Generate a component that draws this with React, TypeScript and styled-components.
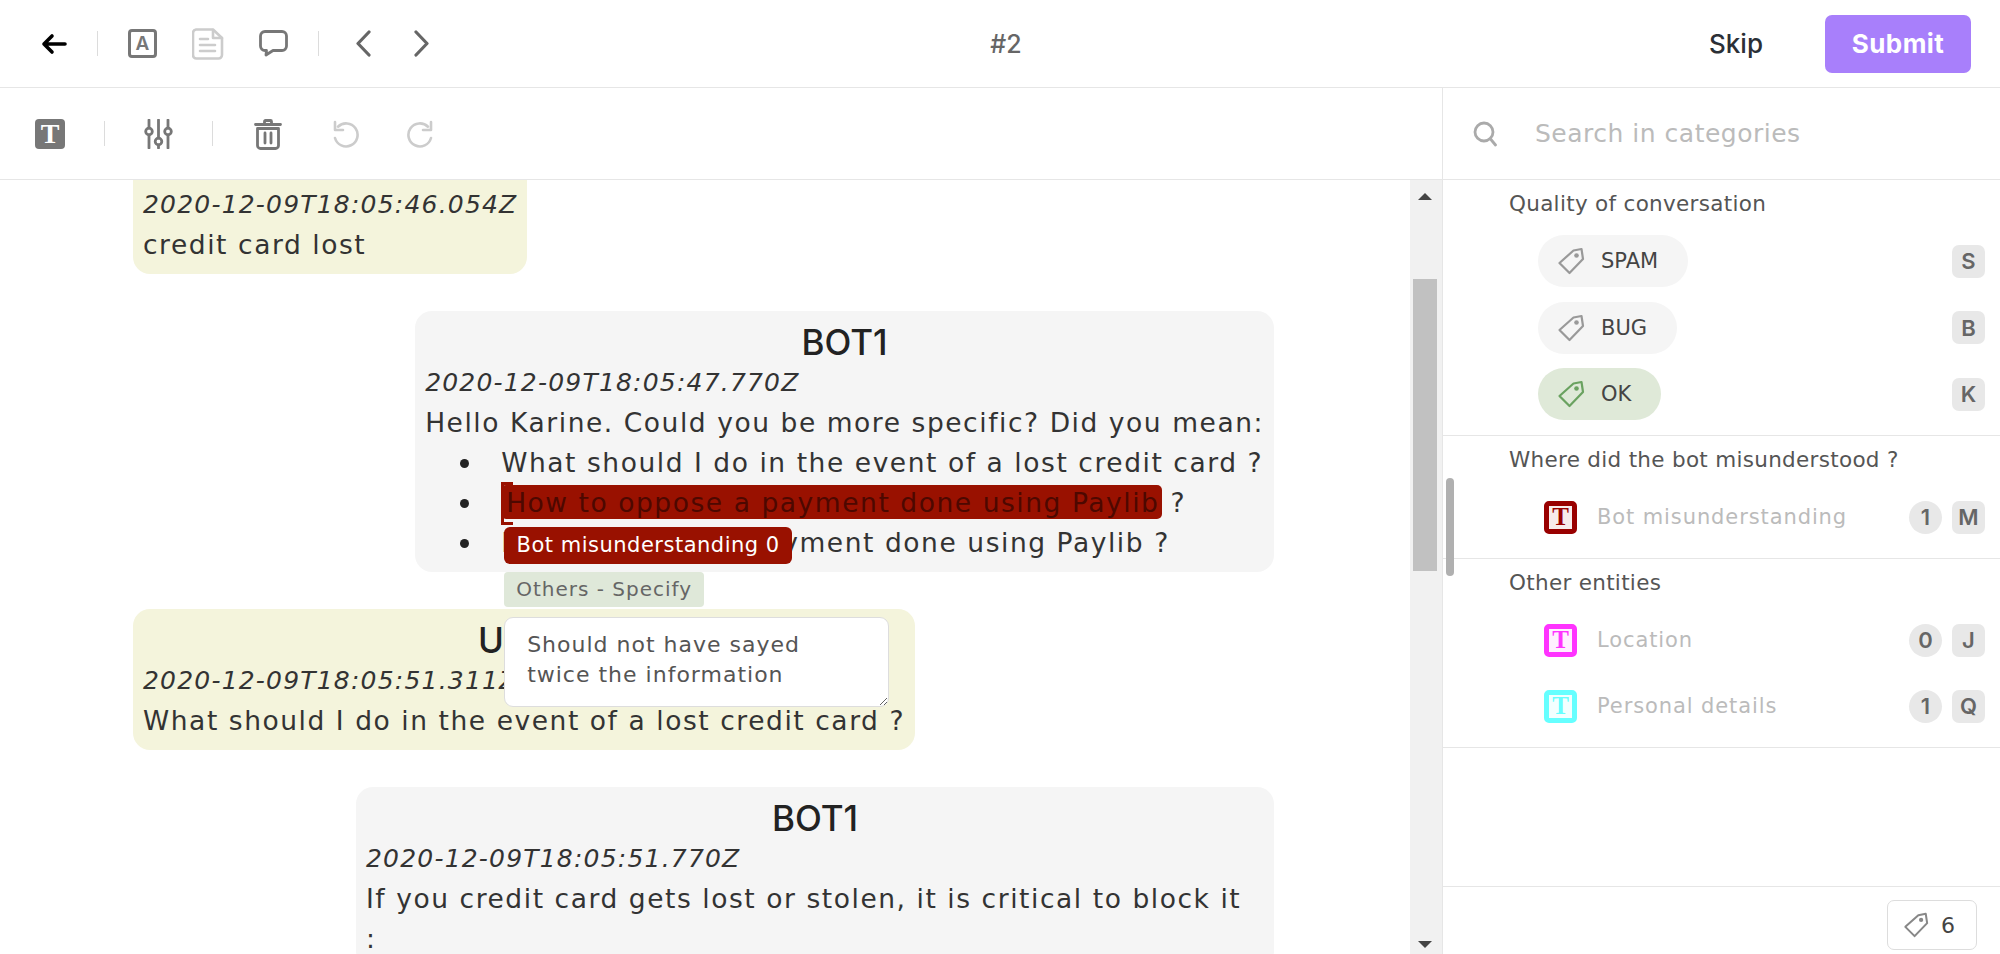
import React, { ReactElement } from 'react';
import styled, { createGlobalStyle } from 'styled-components';

const GlobalStyle = createGlobalStyle`
  html, body {
    margin: 0;
    height: 100%;
    background: #fff;
    overflow: hidden;
  }
  * {
    box-sizing: border-box;
  }
`;

const FONT = `"DejaVu Sans", Inter, sans-serif`;
const HEADING_FONT = `Inter, "Liberation Sans", sans-serif`;

const Page = styled.div`
  display: flex;
  flex-direction: column;
  width: 2000px;
  height: 954px;
  font-family: ${FONT};
  color: #333;
  overflow: hidden;
`;

const TopBar = styled.header`
  display: grid;
  grid-template-columns: 1fr auto 1fr;
  align-items: center;
  flex: 0 0 88px;
  padding: 0 29px 0 41px;
  border-bottom: 1px solid #e6e6e6;
`;

const ToolRow = styled.div<{ $gap: number }>`
  display: flex;
  align-items: center;
  gap: ${(p) => p.$gap}px;
`;

const UndoRow = styled(ToolRow)`
  margin-left: 9px;
`;

const Sep = styled.span`
  width: 1px;
  height: 25px;
  background: #dcdcdc;
`;

const TicketNumber = styled.div`
  font: 500 25px ${HEADING_FONT};
  color: #666;
`;

const TopActions = styled.div`
  display: flex;
  align-items: center;
  justify-content: flex-end;
  gap: 62px;
`;

const SkipButton = styled.button`
  padding: 0;
  border: 0;
  background: none;
  font: 500 26px ${HEADING_FONT};
  color: #2b2f36;
`;

const SubmitButton = styled.button`
  width: 146px;
  height: 58px;
  border: 0;
  border-radius: 7px;
  background: #a87ffb;
  font: 700 26px ${HEADING_FONT};
  letter-spacing: 0.4px;
  color: #fff;
`;

const LetterBox = styled.span`
  display: flex;
  align-items: center;
  justify-content: center;
  width: 29px;
  height: 29px;
  border: 3px solid #777;
  border-radius: 4px;
  font: 600 19px ${HEADING_FONT};
  color: #777;
`;

const Workspace = styled.div`
  display: flex;
  flex: 1;
  min-height: 0;
`;

const Editor = styled.main`
  display: flex;
  flex-direction: column;
  width: 1442px;
`;

const EditorTools = styled.div`
  display: flex;
  align-items: center;
  gap: 39px;
  flex: 0 0 92px;
  padding-left: 35px;
  border-bottom: 1px solid #e6e6e6;
`;

const EntityButton = styled.span`
  display: flex;
  align-items: center;
  justify-content: center;
  width: 30px;
  height: 30px;
  border-radius: 4px;
  background: #777;
  font: 700 28px "Liberation Serif", serif;
  color: #fff;
`;

const ConversationPane = styled.div`
  display: flex;
  flex: 1;
  min-height: 0;
  overflow: hidden;
`;

const Conversation = styled.div`
  display: flex;
  flex: 1;
  flex-direction: column;
  gap: 37px;
  margin-top: -47px;
  padding: 0 136px 0 133px;
  font-size: 26.5px;
  letter-spacing: 1.55px;
  line-height: 40px;
`;

const Bubble = styled.article<{ $from: 'user' | 'bot'; $width?: number }>`
  flex: none;
  align-self: ${(p) => (p.$from === 'user' ? 'flex-start' : 'flex-end')};
  width: ${(p) => (p.$width ? `${p.$width}px` : 'fit-content')};
  padding: 10px 10px 9px;
  border-radius: 17px;
  background: ${(p) => (p.$from === 'user' ? '#f4f4dc' : '#f5f5f5')};
`;

const Speaker = styled.h3`
  margin: 0;
  font: 500 35px/42px ${HEADING_FONT};
  letter-spacing: 0;
  text-align: center;
  color: #222;
`;

const Timestamp = styled.div`
  font-style: italic;
  font-size: 25px;
  letter-spacing: 1.2px;
  color: #333;
`;

const Options = styled.ul`
  margin: 0;
  padding: 0 0 0 35px;
  list-style: none;
`;

const Option = styled.li`
  display: flex;
  align-items: center;
  height: 40px;
  white-space: nowrap;

  &::before {
    content: '';
    flex: none;
    width: 9px;
    height: 9px;
    margin-right: 32px;
    border-radius: 50%;
    background: #222;
  }
`;

const Highlight = styled.span`
  position: relative;
  display: inline-block;
  height: 34px;
  margin: 0 9px 3px 0;
  padding: 0 2px 0 5px;
  border-radius: 5px;
  background: #991100;
  line-height: 36px;
  color: #4d0800;
`;

const Bracket = styled.span`
  position: absolute;
  top: -3px;
  left: 0;
  width: 12px;
  height: 43px;
  border: 3px solid #991100;
  border-right: 0;
`;

const Annotation = styled.div`
  position: absolute;
  z-index: 2;
  top: 42px;
  left: 3px;
  display: flex;
  flex-direction: column;
  align-items: flex-start;
  letter-spacing: 0;
`;

const EntityLabel = styled.div`
  width: 288px;
  height: 37px;
  border-radius: 6px;
  background: #991100;
  font-size: 21px;
  letter-spacing: 0.5px;
  line-height: 37px;
  text-align: center;
  color: #fff;
`;

const SpecifyLabel = styled.div`
  width: 200px;
  height: 35px;
  margin-top: 8px;
  border-radius: 4px;
  background: #dfe8d9;
  font-size: 20px;
  letter-spacing: 1px;
  line-height: 35px;
  text-align: center;
  color: #666;
`;

const CommentBox = styled.textarea`
  width: 385px;
  height: 90px;
  margin-top: 10px;
  padding: 12px 22px;
  border: 1px solid #ddd;
  border-radius: 9px;
  outline: 0;
  background: #fff;
  font: 400 22px/30px ${FONT};
  letter-spacing: 1px;
  color: #555;
`;

const Scrollbar = styled.div`
  display: flex;
  flex-direction: column;
  align-items: center;
  flex: 0 0 32px;
  padding-right: 3px;
  background: #f1f1f1;
`;

const ScrollArrow = styled.span<{ $down?: boolean }>`
  width: 0;
  height: 0;
  margin: ${(p) => (p.$down ? 'auto 0 6px' : '13px 0 0')};
  border-right: 7px solid transparent;
  border-left: 7px solid transparent;
  border-top: ${(p) => (p.$down ? '7px solid #444' : '0')};
  border-bottom: ${(p) => (p.$down ? '0' : '7px solid #444')};
`;

const ScrollThumb = styled.span`
  width: 24px;
  height: 292px;
  margin-top: 79px;
  background: #c1c1c1;
`;

const Sidebar = styled.aside`
  position: relative;
  display: flex;
  flex: 1;
  flex-direction: column;
  border-left: 1px solid #e6e6e6;
`;

const SearchRow = styled.div`
  display: flex;
  align-items: center;
  flex: 0 0 92px;
  padding-left: 30px;
  gap: 38px;
  border-bottom: 1px solid #e6e6e6;
`;

const SearchInput = styled.input`
  flex: 1;
  min-width: 0;
  padding: 0;
  border: 0;
  outline: 0;
  background: none;
  font: 400 25px ${FONT};
  letter-spacing: 0.5px;

  &::placeholder {
    color: #bbb;
    opacity: 1;
  }
`;

const Section = styled.section<{ $rowGap: number; $first: number; $bottom: number }>`
  display: flex;
  flex-direction: column;
  gap: ${(p) => p.$rowGap}px;
  padding: 9px 15px ${(p) => p.$bottom}px 66px;
  border-bottom: 1px solid #e6e6e6;

  & > h4 {
    margin: 0 0 ${(p) => p.$first - p.$rowGap}px;
    font-size: 21.5px;
    font-weight: 400;
    letter-spacing: 0.3px;
    line-height: 30px;
    color: #555;
  }
`;

const ChoiceRow = styled.div`
  display: flex;
  align-items: center;
  justify-content: space-between;
  height: 52px;
  padding-left: 29px;
`;

const Pill = styled.div<{ $selected?: boolean }>`
  display: flex;
  align-items: center;
  gap: 16px;
  height: 52px;
  padding: 0 30px 0 19px;
  border-radius: 26px;
  background: ${(p) => (p.$selected ? '#dfe9d8' : '#f5f5f5')};
  font-size: 21px;
  color: #444;
`;

const EntityRow = styled.div`
  display: flex;
  align-items: center;
  height: 32px;
  padding-left: 35px;
`;

const EntityIcon = styled.span<{ $color: string }>`
  display: flex;
  align-items: center;
  justify-content: center;
  flex: none;
  width: 33px;
  height: 33px;
  border: 5px solid ${(p) => p.$color};
  border-radius: 5px;
  background: ${(p) => p.$color}14;
  font: 700 25px "Liberation Serif", serif;
  color: ${(p) => p.$color};
`;

const EntityName = styled.span`
  flex: 1;
  margin-left: 20px;
  font-size: 21px;
  letter-spacing: 0.9px;
  color: #bbb;
`;

const Keys = styled.div`
  display: flex;
  align-items: center;
  gap: 10px;
`;

const KeyCap = styled.span<{ $round?: boolean }>`
  display: flex;
  align-items: center;
  justify-content: center;
  width: 33px;
  height: 33px;
  border-radius: ${(p) => (p.$round ? '50%' : '7px')};
  background: #e8e8e8;
  font: 600 22px ${HEADING_FONT};
  color: #666;
`;

const SideScrollThumb = styled.span`
  position: absolute;
  top: 390px;
  left: 3px;
  width: 8px;
  height: 98px;
  border-radius: 4px;
  background: #b0b0b0;
`;

const Footer = styled.footer`
  display: flex;
  justify-content: flex-end;
  margin-top: auto;
  height: 68px;
  padding: 13px 23px 0 0;
  border-top: 1px solid #e6e6e6;
`;

const CountButton = styled.button`
  display: flex;
  align-items: center;
  gap: 12px;
  width: 90px;
  height: 50px;
  padding: 0 0 0 15px;
  border: 1px solid #ddd;
  border-radius: 7px;
  background: #fff;
  font: 400 22px ${FONT};
  color: #444;
`;

const BackIcon = (): ReactElement => (
  <svg width="26" height="22" viewBox="0 0 26 22" fill="none" stroke="#000" strokeWidth="3.6" strokeLinecap="round" strokeLinejoin="round">
    <path d="M24 11H3M11 3l-8 8 8 8" />
  </svg>
);

const DocIcon = (): ReactElement => (
  <svg width="32" height="32" viewBox="0 0 32 32" fill="none" stroke="#ccc" strokeWidth="2.6" strokeLinejoin="round" strokeLinecap="round">
    <path d="M4 1.5h17l9 8.5v17a3.5 3.5 0 0 1-3.5 3.5h-22A3.5 3.5 0 0 1 1 27V5a3.5 3.5 0 0 1 3-3.5z" />
    <path d="M21 2v8h9M8 11h8M8 17h15M8 23h15" />
  </svg>
);

const CommentIcon = (): ReactElement => (
  <svg width="29" height="27" viewBox="0 0 29 27" fill="none" stroke="#777" strokeWidth="2.8" strokeLinejoin="round">
    <path d="M6 1.5h17a4.5 4.5 0 0 1 4.5 4.5v10a4.5 4.5 0 0 1-4.5 4.5H14L7 25l.5-4.5H6A4.5 4.5 0 0 1 1.5 16V6A4.5 4.5 0 0 1 6 1.5z" />
  </svg>
);

const Chevron = ({ right }: { right?: boolean }): ReactElement => (
  <svg width="29" height="27" viewBox="0 0 29 27" fill="none" stroke="#666" strokeWidth="3.2" strokeLinecap="round" strokeLinejoin="round">
    <path d={right ? 'M9 2l11 11.5L9 25' : 'M20 2L9 13.5 20 25'} />
  </svg>
);

const SlidersIcon = (): ReactElement => (
  <svg width="29" height="30" viewBox="0 0 29 30" fill="none" stroke="#777" strokeWidth="2.8" strokeLinecap="round">
    <path d="M5 1v8M5 16v13M14.5 1v18M14.5 26v3M24 1v8M24 16v13" />
    <circle cx="5" cy="12.5" r="3.3" />
    <circle cx="14.5" cy="22.5" r="3.3" />
    <circle cx="24" cy="12.5" r="3.3" />
  </svg>
);

const TrashIcon = (): ReactElement => (
  <svg width="32" height="32" viewBox="0 0 32 32" fill="none" stroke="#777" strokeWidth="2.8" strokeLinecap="round" strokeLinejoin="round">
    <path d="M3.5 6.5h25M12.5 6V3.5a1 1 0 0 1 1-1h5a1 1 0 0 1 1 1V6" />
    <path d="M5.5 10.5v17a3 3 0 0 0 3 3h15a3 3 0 0 0 3-3v-17z" />
    <path d="M13 15v10M19 15v10" />
  </svg>
);

const UndoIcon = ({ redo }: { redo?: boolean }): ReactElement => (
  <svg width="27" height="28" viewBox="0 0 27 28" fill="none" stroke="#ccc" strokeWidth="2.6" strokeLinecap="round" strokeLinejoin="round">
    <g transform={redo ? 'matrix(-1 0 0 1 27 0)' : undefined}>
      <path d="M6 6.7A11.5 11.5 0 1 1 3 18" />
      <path d="M3 2v8h8" />
    </g>
  </svg>
);

const SearchIcon = (): ReactElement => (
  <svg width="24" height="26" viewBox="0 0 24 26" fill="none" stroke="#aaa" strokeWidth="2.8" strokeLinecap="round">
    <circle cx="11" cy="11" r="9" />
    <path d="M17.5 18l5 6" />
  </svg>
);

const TagIcon = ({ color = '#999', size = 28 }: { color?: string; size?: number }): ReactElement => (
  <svg width={size} height={size} viewBox="0 0 28 28" fill="none" stroke={color} strokeWidth="2.2" strokeLinejoin="round">
    <path d="M16.5 3.5l8-1.5 1.5 10L12.5 26 2.5 16z" />
    <circle cx="19.5" cy="8.5" r="2.3" fill={color} stroke="none" />
  </svg>
);

const App = (): ReactElement => {
  return (
    <Page>
      <GlobalStyle />
      <TopBar>
        <ToolRow $gap={30}>
          <BackIcon />
          <Sep />
          <ToolRow $gap={35}>
            <LetterBox>A</LetterBox>
            <DocIcon />
            <CommentIcon />
          </ToolRow>
          <Sep />
          <ToolRow $gap={29}>
            <Chevron />
            <Chevron right />
          </ToolRow>
        </ToolRow>
        <TicketNumber>#2</TicketNumber>
        <TopActions>
          <SkipButton type="button">Skip</SkipButton>
          <SubmitButton type="button">Submit</SubmitButton>
        </TopActions>
      </TopBar>
      <Workspace>
        <Editor>
          <EditorTools>
            <EntityButton>T</EntityButton>
            <Sep />
            <SlidersIcon />
            <Sep />
            <TrashIcon />
            <UndoRow $gap={48}>
              <UndoIcon />
              <UndoIcon redo />
            </UndoRow>
          </EditorTools>
          <ConversationPane>
            <Conversation>
              <Bubble $from="user">
                <Speaker>USER</Speaker>
                <Timestamp>2020-12-09T18:05:46.054Z</Timestamp>
                <div>credit card lost</div>
              </Bubble>
              <Bubble $from="bot">
                <Speaker>BOT1</Speaker>
                <Timestamp>2020-12-09T18:05:47.770Z</Timestamp>
                <div>Hello Karine. Could you be more specific? Did you mean:</div>
                <Options>
                  <Option>What should I do in the event of a lost credit card ?</Option>
                  <Option>
                    <Highlight>
                      How to oppose a payment done using Paylib
                      <Bracket />
                      <Annotation>
                        <EntityLabel>Bot misunderstanding 0</EntityLabel>
                        <SpecifyLabel>Others - Specify</SpecifyLabel>
                        <CommentBox defaultValue={'Should not have sayed\ntwice the information'} />
                      </Annotation>
                    </Highlight>
                    ?
                  </Option>
                  <Option>How to cancel a payment done using Paylib ?</Option>
                </Options>
              </Bubble>
              <Bubble $from="user">
                <Speaker>USER</Speaker>
                <Timestamp>2020-12-09T18:05:51.311Z</Timestamp>
                <div>What should I do in the event of a lost credit card ?</div>
              </Bubble>
              <Bubble $from="bot" $width={918}>
                <Speaker>BOT1</Speaker>
                <Timestamp>2020-12-09T18:05:51.770Z</Timestamp>
                <div>
                  If you credit card gets lost or stolen, it is critical to block it
                  <br />:
                </div>
              </Bubble>
            </Conversation>
            <Scrollbar>
              <ScrollArrow />
              <ScrollThumb />
              <ScrollArrow $down />
            </Scrollbar>
          </ConversationPane>
        </Editor>
        <Sidebar>
          <SearchRow>
            <SearchIcon />
            <SearchInput placeholder="Search in categories" />
          </SearchRow>
          <Section $rowGap={14.5} $first={16} $bottom={15}>
            <h4>Quality of conversation</h4>
            <ChoiceRow>
              <Pill>
                <TagIcon />
                SPAM
              </Pill>
              <KeyCap>S</KeyCap>
            </ChoiceRow>
            <ChoiceRow>
              <Pill>
                <TagIcon />
                BUG
              </Pill>
              <KeyCap>B</KeyCap>
            </ChoiceRow>
            <ChoiceRow>
              <Pill $selected>
                <TagIcon color="#6aa260" />
                OK
              </Pill>
              <KeyCap>K</KeyCap>
            </ChoiceRow>
          </Section>
          <Section $rowGap={34} $first={26} $bottom={25}>
            <h4>Where did the bot misunderstood ?</h4>
            <EntityRow>
              <EntityIcon $color="#990000">T</EntityIcon>
              <EntityName>Bot misunderstanding</EntityName>
              <Keys>
                <KeyCap $round>1</KeyCap>
                <KeyCap>M</KeyCap>
              </Keys>
            </EntityRow>
          </Section>
          <Section $rowGap={34} $first={26} $bottom={25}>
            <h4>Other entities</h4>
            <EntityRow>
              <EntityIcon $color="#ff33ff">T</EntityIcon>
              <EntityName>Location</EntityName>
              <Keys>
                <KeyCap $round>0</KeyCap>
                <KeyCap>J</KeyCap>
              </Keys>
            </EntityRow>
            <EntityRow>
              <EntityIcon $color="#66ffff">T</EntityIcon>
              <EntityName>Personal details</EntityName>
              <Keys>
                <KeyCap $round>1</KeyCap>
                <KeyCap>Q</KeyCap>
              </Keys>
            </EntityRow>
          </Section>
          <Footer>
            <CountButton type="button">
              <TagIcon color="#888" size={26} />6
            </CountButton>
          </Footer>
          <SideScrollThumb />
        </Sidebar>
      </Workspace>
    </Page>
  );
};

export default App;
